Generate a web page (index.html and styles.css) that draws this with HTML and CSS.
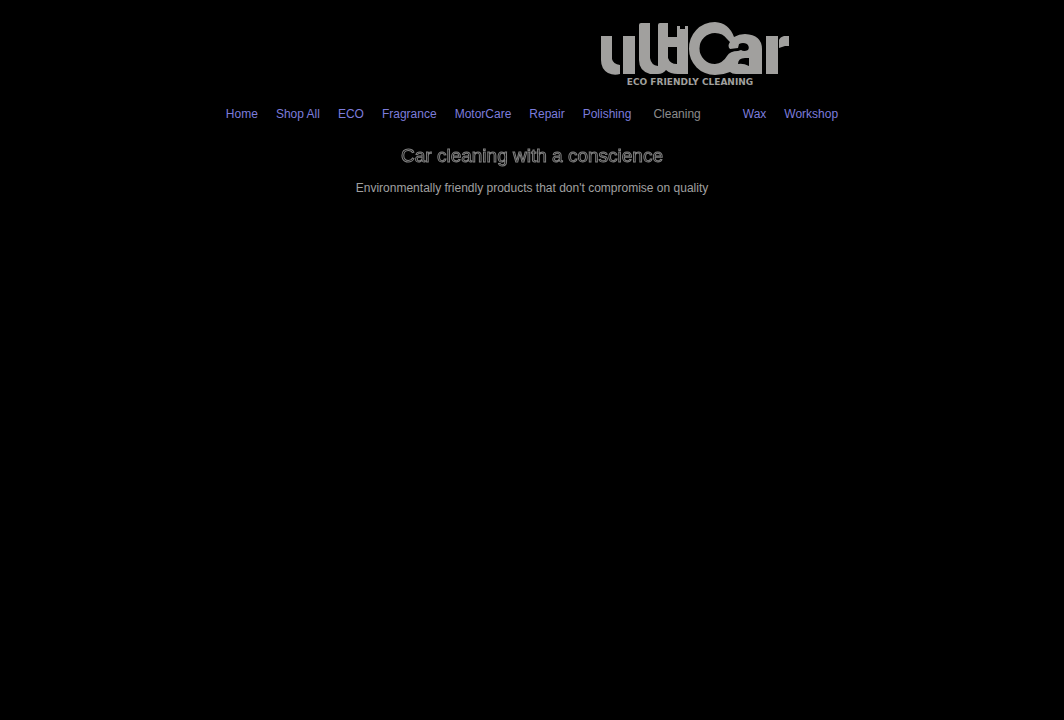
FILE: index.html
```
<!DOCTYPE html>
<html lang="en">
<head>
<meta charset="utf-8">
<meta name="viewport" content="width=device-width, initial-scale=1">
<title>ultiCar – Eco Friendly Cleaning</title>
<link rel="stylesheet" href="styles.css">
</head>
<body>
<header class="header">
  <a class="logo" href="#" aria-label="ultiCar home">
    <svg class="logo-mark" viewBox="0 0 190 68" width="190" height="68">
      <g fill="#a1a09e">
        <path d="M1 16H12V39Q13 44 20 45V54Q14 56 8 53Q1 49 1 40Z"/>
        <path d="M23 16H35V54H23Z"/>
        <path d="M39 5Q39 3 41 3H50V38Q51 45 58 46V5Q58 3 60 3H68V17H77V6H80V9H85V6H88V54H78Q70 54 66 50Q63 54 58 54H50Q39 51 39 40ZM68 27V38Q70 44 77 44V27Z" fill-rule="evenodd"/>
        <path d="M134 17Q139 14 145 14Q162 15 162 29V54H136Q132 54 130 52Q123 55 115 55A26 26 0 0 1 89 29A26 26 0 0 1 115 2Q129 3 134 17ZM127 19Q123 13 115 13A15 15 0 0 0 115 44Q123 43 127 36Q130 31 138 31L141 30Q144 32 148 30Q150 27 147 24Q143 22 139 24L138 28L130 29Q127 26 130 22ZM138 44Q138 38 145 38H149V46Q143 43 138 44Z" fill-rule="evenodd"/>
        <path d="M166 16H178V54H166ZM179 20Q180 17 184 16H189V26H185L179 28Z"/>
      </g>
      <text class="tagline" x="90" y="65" text-anchor="middle">ECO FRIENDLY CLEANING</text>
    </svg>
  </a>
</header>
<nav class="nav" aria-label="Main">
  <a href="#">Home</a>
  <a href="#">Shop All</a>
  <a href="#">ECO</a>
  <a href="#">Fragrance</a>
  <a href="#">MotorCare</a>
  <a href="#">Repair</a>
  <a href="#">Polishing</a>
  <a class="menu" href="#">Cleaning</a>
  <a href="#">Wax</a>
  <a href="#">Workshop</a>
</nav>
<main class="intro">
  <h1>Car cleaning with a conscience</h1>
  <p>Environmentally friendly products that don't compromise on quality</p>
</main>
</body>
</html>
```
FILE: styles.css
```
* { box-sizing: border-box; }
body {
  margin: 0;
  min-height: 100vh;
  background: #000;
  color: #a0a0a0;
  font: 12px/16px "Liberation Sans", Arial, sans-serif;
}
.header {
  display: flex;
  justify-content: flex-end;
  max-width: 616px;
  margin: 0 auto;
  padding: 20px 50px 18px 0;
}
.logo, .logo-mark { display: block; }
.tagline {
  fill: #a1a09e;
  font: bold 9px "DejaVu Sans", sans-serif;
}
.nav {
  display: flex;
  flex-wrap: wrap;
  justify-content: center;
  gap: 8px 18px;
}
.nav a {
  color: #7c7cdc;
  text-decoration: none;
}
.nav .menu {
  padding: 0 24px 0 4px;
  color: #8c8c8c;
}
.intro {
  padding: 22px 16px;
  text-align: center;
}
.intro h1 {
  margin: 0;
  color: #000;
  font-size: 19px;
  font-weight: 400;
  line-height: 24px;
  -webkit-text-stroke: 1px #808080;
  filter: grayscale(1);
}
.intro p { margin: 12px 0 0; }
```
